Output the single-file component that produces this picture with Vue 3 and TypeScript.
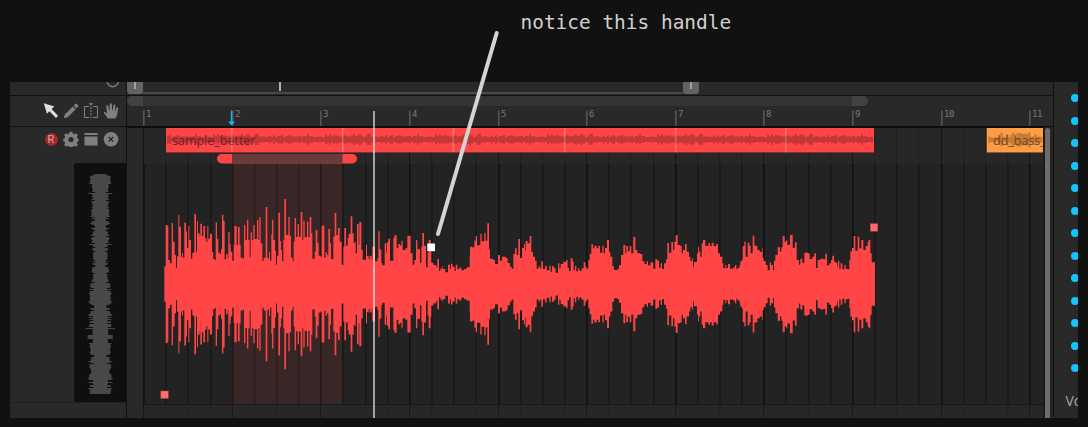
<script setup lang="ts">
interface Tick {
  label: string
  x: number
}

const BAR = 88.6
const ORIGIN = 17 // first bar line, measured from the timeline's left edge

const ticks: Tick[] = Array.from({ length: 11 }, (_, i) => ({
  label: String(i + 1),
  x: Math.round(ORIGIN + i * BAR - 0.9),
}))

const gridLines = Array.from({ length: 41 }, (_, i) => ({
  x: Math.round(ORIGIN + (i * BAR) / 4 - 0.9),
  major: i % 4 === 0,
}))

const loopMarks = [104, 215, 325.6, 437, 548, 658]
const dots = Array.from({ length: 13 }, (_, i) => i)

// Envelope steps "offset:top" in thirds of a pixel, grouped by section start.
const sections: [number, string][] = [
  [
    150,
    '43:229 47:105 53:110 55:210 60:220 65:99 69:155 74:195 78:234 81:199 85:75 88:110 93:200 96:189 99:203 103:98 108:124 111:174 115:108 118:150 123:206 127:189 131:186 133:72 138:185 141:93 144:130 149:139 151:101 156:138 160:108 165:145 169:156 172:108 175:146 180:131 186:186 190:208 195:211 197:97 201:147 205:188 210:193 213:178 216:74 220:92 224:208 228:192 233:204 235:126 239:163 242:185 247:212 251:165 253:108 260:165 264:111 269:164 272:203 279:206 282:105 286:150 291:89 295:150 299:202 302:127 306:150 310:105 314:147 321:90 325:150 328:82 332:160 337:212 341:203 347:51 352:205 357:186 360:212 364:133 366:89 370:150 375:182 378:224 381:197 385:68 390:153 393:180 396:214 400:150 403:27 408:135 415:81 419:138 423:203 428:214 431:155 434:84 438:141 443:102 447:140 452:66 457:150 460:92 464:142 471:95 475:142 479:81 484:130 487:206 494:185 497:120 502:158 506:197 512:200',
  ],
  [
    320,
    '5:107 13:203 17:187 21:195 25:117 30:160 33:208 40:140 44:69 49:136 54:114 59:155 65:224 70:170 73:114 78:167 83:144 86:131 92:79 97:130 101:160 104:156 107:190 111:102 116:165 118:96 124:180 128:209 138:164 141:198 146:208 149:197 155:208 157:170 165:214 172:205 175:124 179:178 184:219 187:226 194:160 199:188 201:157 205:146 210:212 220:145 223:136 230:175 235:162 240:166 244:152 248:180 256:175 262:137 272:190 278:224 283:210 288:150 292:178 300:219 304:170 307:129 312:167 318:232 323:188 326:150 332:184 334:218 340:225 349:232 352:207 357:243 361:236 367:229 369:237 376:247 384:224 390:236 393:221 398:230 404:243 407:224 412:237 418:233 424:241 432:237 440:232 449:199 450:170 456:172 463:152 467:138 471:166 481:131 485:154 493:129 497:152 502:100 507:178',
  ],
  [
    490,
    '0:206 10:210 15:222 24:195 30:212 36:200 47:204 53:219 60:230 65:236 70:192 75:175 80:195 85:147 90:204 96:174 102:162 105:182 107:153 113:160 119:138 124:186 129:200 135:212 140:236 146:229 150:235 154:214 159:237 165:228 170:241 178:228 182:245 186:229 192:235 197:248 204:220 208:235 212:222 220:215 229:210 233:234 237:243 242:205 248:215 251:240 255:227 259:244 264:235 268:242 275:235 281:217 286:230 290:236 295:210 299:192 304:163 309:175 313:167 320:175 325:168 330:188 337:167 341:190 345:174 351:150 357:185 361:200 367:229 372:240 383:236 387:226 393:195 400:165 406:190 409:168 414:184 419:168 424:190 430:141 436:180 442:190 450:192 457:213 463:222 470:214 474:226 482:217 490:236 496:208 502:212 507:234 512:220 516:237 522:220 528:208 532:159 537:188 544:156 549:180 553:155 557:136 563:165',
  ],
  [
    680,
    '0:167 5:190 9:180 15:162 20:185 27:200 31:213 36:205 39:230 42:216 51:190 54:170 57:185 61:200 65:160 69:150 76:168 82:167 85:160 90:168 95:158 101:168 109:162 114:190 120:200 127:220 130:235 136:225 139:234 144:222 150:236 160:232 165:225 169:238 173:233 179:225 181:214 186:208 188:168 193:155 197:200 203:158 208:167 212:190 218:137 223:167 232:180 239:185 246:174 248:204 251:213 257:225 263:241 269:217 273:225 279:241 282:212 286:195 293:172 300:185 304:172 308:138 314:155 319:150 322:164 330:135 338:173 345:157 350:210 357:224 361:206 367:219 373:188 384:190 389:207 397:200 403:190 408:234 413:210 421:206 430:208 436:191 441:226 448:220 453:210 457:197 462:214 466:218 472:230 474:212 478:236 482:220 487:238 493:225 497:236 502:238 508:210 511:184 516:174 521:138 526:182 533:140 538:175 544:150 550:180 557:168 563:155 566:150 571:190 575:217 585:217',
  ],
]

function envelopePath(): string {
  const pts: [number, number][] = []
  for (const [start, text] of sections) {
    for (const pair of text.split(' ')) {
      const [dx, top] = pair.split(':').map(Number)
      pts.push([start + dx / 3 - 127, (282.3 - top) / 3])
    }
  }
  const mid = 284.1 - 127
  let up = ''
  let down = ''
  for (let i = 0; i < pts.length - 1; i++) {
    const [x, a] = pts[i]
    const nx = pts[i + 1][0]
    up += `L${x.toFixed(2)} ${(mid - a).toFixed(2)}H${nx.toFixed(2)}`
    down = `L${nx.toFixed(2)} ${(mid + a).toFixed(2)}H${x.toFixed(2)}` + down
  }
  return 'M' + up.slice(1) + down + 'Z'
}

// Small repeatable generator for the thumbnails' envelopes.
function noise(seed: number) {
  let s = seed
  return () => {
    s = (s * 16807) % 2147483647
    return s / 2147483647
  }
}

function thumbPath(width: number, period: number, seed: number, lo: number, hi: number, mid: number): string {
  const rnd = noise(seed)
  const count = Math.round(period / 2)
  const cells = Array.from({ length: count }, () => {
    const r = rnd()
    return r > 0.66 ? lo + (hi - lo) * (0.45 + rnd() * 0.5) : lo + rnd() * 1.6
  })
  let d = ''
  for (let x = 0; x < width; x += 2) {
    const a = cells[Math.floor((x % period) / 2) % count]
    d += `M${x} ${(mid - a).toFixed(1)}h2v${(2 * a).toFixed(1)}h-2z`
  }
  return d
}

// Vertical preview: base half-widths at even distances, alternating with short rows.
const profile = [11, 11, 9, 8.5, 8.5, 9, 8.5, 9.5, 9.5, 9, 9, 8, 9, 9, 8, 8, 8, 8, 8, 9, 8, 9, 10.5, 11.5, 11, 11, 10, 10, 12, 11, 12, 12.5, 13, 12, 11, 10.5, 10, 10.5, 11, 10, 11.5, 12, 11, 11, 10.5]
const outliers: Record<number, number> = { 19: 12, 49: 10, 70: 11, 127: 12, 154: 14.5, 164: 13, 187: 12, 204: 12.5, 214: 12, 219: 10 }

function previewPath(): string {
  const rnd = noise(77)
  let d = ''
  for (let y = 0; y < 220; y++) {
    const base = profile[Math.floor(y / 5)] ?? 10
    const r = rnd()
    const solid = y < 10 || (y > 30 && y < 43) || (y > 168 && y < 176) || (y > 190 && y < 203)
    let w = r > 0.7 && !solid ? base * 0.62 : base - rnd() * 1.2
    if (y < 3) w = 6 + y * 2
    if (outliers[y]) w = outliers[y]
    d += `M${(26.3 - w).toFixed(1)} ${y + 11}h${(2 * w).toFixed(1)}v1h${(-2 * w).toFixed(1)}z`
  }
  return d
}

const wave = envelopePath()
const redThumb = thumbPath(706, 110.8, 4211, 2.2, 6, 11.5)
const orangeThumb = thumbPath(54, 80, 918, 2, 8, 11.7)
const preview = previewPath()
</script>

<template>
  <div class="stage">
    <p class="note">notice this handle</p>

    <div class="daw">
      <aside class="side">
        <div class="side-top">
          <svg width="16" height="13" viewBox="0 0 16 13"><circle cx="8.8" cy="-1" r="5.7" fill="none" stroke="#777" stroke-width="1.4" /></svg>
        </div>
        <div class="tools">
          <svg class="icon lit" viewBox="0 0 16 16"><path d="M.8.3 11.4 3.4 8.6 6 15 12.700l-2 2.200L6.400 8.300 3.900 10.700z" /></svg>
          <svg class="icon" viewBox="0 0 16 16"><path d="M.8 15.300 1.800 11.400 9.800 3.400 12.700 6.300 4.700 14.300zM10.600 2.600 12.300.9q.8-.6 1.500 0l1.300 1.300q.6.800 0 1.500L13.500 5.400z" /></svg>
          <svg class="icon" viewBox="0 0 16 16"><path d="M6 3.500H1.500v11H6M10 3.500h4.500v11H10" fill="none" stroke="#808080" /><path d="M8 4v11" fill="none" stroke="#808080" stroke-dasharray="2 1" /><path d="M5.500.2h5L8 2.700z" /></svg>
          <svg class="icon" viewBox="0 0 16 16"><path d="M4.900 15.500 1 10.100Q.4 8.900 1.400 8.700q.8 0 1.300.8L4 10.500 3.300 3.200q0-1 .8-1.100t1.100.9l.9 4.500h.4L6.700 1.400Q6.900.3 7.800.3t1.100 1.100l.2 6h.4l1-5.200q.3-1 1.100-.8t.8 1.100L11.800 8h.4l1.200-3.200q.5-.9 1.200-.6t.5 1.200l-1 6q-.4 2.900-2.100 4.100z" /></svg>
        </div>
        <div class="track">
          <div class="track-icons">
            <span class="rec">R</span>
            <svg class="icon" viewBox="0 0 16 16"><path fill-rule="evenodd" d="M6.600.8h2.800l.5 2 1.100.5 1.900-1.100 2 2-1.100 1.800.5 1.200 1.400.5v2.600l-1.400.5-.5 1.200 1.100 1.800-2 2-1.900-1.100-1.100.5-.5 1.200H6.600l-.5-1.200-1.100-.5-1.900 1.100-2-2L2.200 12l-.5-1.200-1.400-.5V7.700l1.400-.5L2.200 6 1.100 4.200l2-2L5 3.300l1.100-.5zM8 5.900a2.600 2.600 0 1 0 0 5.200 2.600 2.600 0 0 0 0-5.200z" /></svg>
            <svg class="icon" viewBox="0 0 16 16"><path d="M1.500 2h13v2h-13zM1.500 5.500h13v9h-13z" /></svg>
            <svg class="icon" viewBox="0 0 16 16"><circle cx="8" cy="8.300" r="7.300" /><path d="m5.700 6 4.600 4.600m0-4.600-4.600 4.600" fill="none" stroke="#252525" stroke-width="1.300" /></svg>
          </div>
          <div class="preview">
            <svg width="52" height="240" viewBox="0 0 52 240"><path :d="preview" fill="#484848" /></svg>
          </div>
          <div class="side-foot"></div>
        </div>
      </aside>

      <main class="timeline">
        <div class="overview">
          <div class="thumb"><i></i></div>
          <div class="range"><i></i></div>
          <div class="thumb end"><i></i></div>
        </div>
        <div class="ruler">
          <div class="loopbar"><i></i><b></b><i></i></div>
          <svg class="ticks" width="926" height="20" viewBox="0 0 926 20">
            <g v-for="t in ticks" :key="t.label">
              <rect :x="t.x" y="4.500" width="1.600" height="15.500" fill="#555" />
              <text :x="t.x + 3" y="11" class="num">{{ t.label }}</text>
            </g>
            <rect x="103.800" y="4.500" width="1.400" height="13" fill="#16b4f2" />
            <path d="M101 15.500h7l-3.500 4z" fill="#16b4f2" />
          </svg>
        </div>
        <div class="lane">
          <svg class="canvas" width="916" height="291" viewBox="0 0 916 291">
            <rect width="916" height="291" fill="#272727" />
            <rect x="17" y="37" width="899" height="240" fill="#232323" />
            <rect width="16" height="291" fill="#292929" />
            <g shape-rendering="crispEdges">
              <g v-for="g in gridLines" :key="g.x">
                <rect :x="g.x" y="0" width="1" height="37" :fill="g.major ? '#151515' : '#202020'" />
                <rect :x="g.x" y="37" width="1" height="240" :fill="g.major ? '#111' : '#191919'" />
                <rect :x="g.x + 1" y="37" width="1" height="240" :fill="g.major ? '#161616' : '#1b1b1b'" />
                <rect :x="g.x" y="277" width="1" height="14" :fill="g.major ? '#181818' : '#232323'" />
              </g>
              <rect x="17" y="277" width="899" height="1" fill="#171717" />
              <rect x="105" y="37" width="110" height="240" fill="#ff5050" fill-opacity=".1" />
            </g>
            <path :d="wave" fill="#ff4545" />
            <rect x="90" y="27" width="140" height="9.500" rx="4.750" fill="#ff4545" />
            <rect x="105" y="27" width="110.500" height="9.500" fill="#683c3b" />
            <rect width="926" height="1" fill="#0d0d0d" />
            <svg x="39" y="1" width="708" height="25">
              <rect width="708" height="24.400" fill="#ff4545" />
              <path :d="redThumb" transform="translate(1 0)" fill="#c43737" />
              <text x="6" y="17" class="clip-name red">sample_better</text>
              <rect y="24" width="708" height="1" fill="#8b2e2e" />
            </svg>
            <rect v-for="m in loopMarks" :key="m" :x="m" y="1" width="1.600" height="24.500" fill="#fff" fill-opacity=".22" />
            <svg x="859.500" y="1" width="56.500" height="25">
              <rect width="57" height="24.400" fill="#ff9c45" />
              <path :d="orangeThumb" transform="translate(2 0)" fill="#c67a37" />
              <text x="6.500" y="17" class="clip-name orange">dd_bass_</text>
              <rect y="24" width="57" height="1" fill="#8b592e" />
            </svg>
            <g stroke="#a44" stroke-width=".5">
              <rect x="743.300" y="96.700" width="7.500" height="7.500" fill="#ff6b6b" />
              <rect x="33.800" y="264" width="7.500" height="7.500" fill="#ff6b6b" />
            </g>
            <rect x="300.300" y="116.500" width="7.700" height="7.700" fill="#fff" />
          </svg>
          <div class="scroll"></div>
        </div>
        <div class="playhead"></div>
      </main>

      <aside class="mixer">
        <span v-for="d in dots" :key="d" class="dot"></span>
        <span class="vol">Vo</span>
      </aside>
    </div>

    <svg class="pointer" width="1088" height="427" viewBox="0 0 1088 427">
      <path d="M496.700 33 438 234" stroke="#d3d3d3" stroke-width="4" stroke-linecap="round" />
    </svg>
  </div>
</template>

<style>
body {
  background: #111;
}
</style>

<style scoped>
.stage {
  position: relative;
  box-sizing: border-box;
  width: 1088px;
  height: 427px;
  padding: 0 10px;
  overflow: hidden;
  background: #111;
}
.note {
  margin: 0;
  height: 82px;
  padding: 10px 0 0 510.500px;
  box-sizing: border-box;
  font: 19.450px/26px 'DejaVu Sans Mono', monospace;
  color: #d0d0d0;
  white-space: pre;
}
.pointer {
  position: absolute;
  left: 0;
  top: 0;
  pointer-events: none;
}
.daw {
  display: grid;
  grid-template-columns: 117px 926px 25px;
  width: 1068px;
  height: 336px;
  overflow: hidden;
  background: #292929;
}
.side {
  display: flex;
  flex-direction: column;
  border-right: 1px solid #111;
}
.side-top {
  display: flex;
  justify-content: flex-end;
  height: 13px;
  padding-right: 6px;
  border-bottom: 1px solid #111;
}
.tools {
  display: flex;
  justify-content: flex-end;
  align-items: center;
  gap: 4px;
  box-sizing: border-box;
  height: 31px;
  padding: 0 7px 1px 0;
  border-bottom: 1px solid #111;
}
.icon {
  display: block;
  width: 16px;
  height: 16px;
  fill: #808080;
}
.lit {
  fill: #dedede;
}
.track {
  display: flex;
  flex: 1;
  flex-direction: column;
  align-items: flex-end;
}
.track-icons {
  display: flex;
  align-items: center;
  gap: 4px;
  box-sizing: border-box;
  height: 36px;
  padding: 0 7px 12px 0;
}
.rec {
  width: 13px;
  height: 13px;
  margin: 0 0 0 0;
  border-radius: 50%;
  background: #a12828;
  color: #e0a0a0;
  font: 11px/13.500px Roboto, sans-serif;
  text-align: center;
  margin-right: 1.500px;
}
.preview {
  width: 52px;
  height: 240px;
  border-radius: 3px 0 0 3px;
  background: #0f0f0f;
}
.preview svg,
.canvas {
  display: block;
}
.side-foot {
  width: 116px;
  height: 14px;
  margin-top: -1px;
  border-top: 1px solid #202020;
}
.timeline {
  position: relative;
  display: flex;
  flex-direction: column;
}
.overview {
  display: flex;
  height: 13px;
  border-bottom: 1px solid #111;
}
.thumb {
  display: flex;
  justify-content: center;
  width: 16px;
  height: 11.500px;
  border-radius: 0 0 3px 3px;
  background: #636363;
}
.thumb i {
  width: 1.500px;
  height: 7px;
  background: #a0a0a0;
}
.range {
  width: 540px;
  height: 10px;
  border-bottom: 2px solid #484848;
}
.range i {
  display: block;
  width: 2px;
  height: 9px;
  margin-left: 136px;
  background: #b0b0b0;
}
.ruler {
  height: 30px;
  border-bottom: 1px solid #0d0d0d;
}
.loopbar {
  display: flex;
  width: 741px;
  height: 10px;
  border-radius: 5px;
  overflow: hidden;
}
.loopbar i {
  width: 16px;
  background: #424242;
}
.loopbar b {
  flex: 1;
  background: #343434;
}
.ticks {
  display: block;
}
.num {
  font: 9px 'DejaVu Sans Mono', monospace;
  letter-spacing: -0.300px;
  fill: #7a7a7a;
}
.lane {
  display: flex;
  gap: 2px;
  height: 291px;
  background: linear-gradient(to right, #1b1b1b 918px, #242424 918px);
}
.scroll {
  width: 5px;
  margin-top: 1px;
  border-radius: 3px 3px 0 0;
  background: #6c6c6c;
}
.clip-name {
  font: 12.500px 'Open Sans', sans-serif;
}
.red {
  fill: #701e22;
}
.orange {
  fill: #70451e;
}
.playhead {
  position: absolute;
  left: 246px;
  top: 29px;
  bottom: 0;
  width: 2px;
  background: rgba(255, 255, 255, 0.580);
}
.mixer {
  display: flex;
  flex-direction: column;
  align-items: flex-start;
  gap: 14.500px;
  height: 335px;
  box-sizing: border-box;
  padding: 12px 0 0 16.500px;
  border-left: 1px solid #111;
  border-radius: 0 0 0 3px;
  overflow: hidden;
}
.dot {
  flex: none;
  width: 8px;
  height: 8px;
  border-radius: 50%;
  background: #14c4ff;
}
.vol {
  margin: 4px 0 0 -5px;
  font: 14px/20px 'Open Sans', sans-serif;
  color: #a8a8a8;
}
</style>
